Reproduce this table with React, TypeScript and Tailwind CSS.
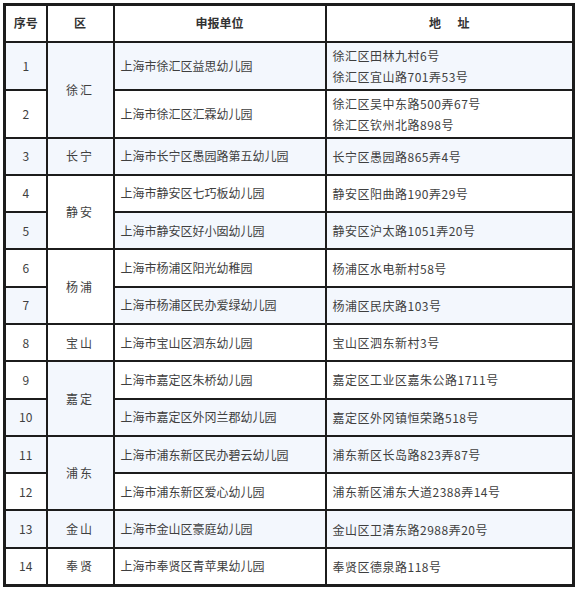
const BLUE = 'bg-[#f3f7fd]';
const WHITE = 'bg-white';

type Row = {
  no: number;
  district?: string;
  span?: number;
  dBlue?: boolean;
  name: string;
  addr: string[];
  blue: boolean;
  tall?: boolean;
};

const rows: Row[] = [
  { no: 1, district: '徐汇', span: 2, dBlue: true, name: '上海市徐汇区益思幼儿园', addr: ['徐汇区田林九村6号', '徐汇区宜山路701弄53号'], blue: true, tall: true },
  { no: 2, name: '上海市徐汇区汇霖幼儿园', addr: ['徐汇区吴中东路500弄67号', '徐汇区钦州北路898号'], blue: false, tall: true },
  { no: 3, district: '长宁', span: 1, dBlue: true, name: '上海市长宁区愚园路第五幼儿园', addr: ['长宁区愚园路865弄4号'], blue: true },
  { no: 4, district: '静安', span: 2, dBlue: false, name: '上海市静安区七巧板幼儿园', addr: ['静安区阳曲路190弄29号'], blue: false },
  { no: 5, name: '上海市静安区好小囡幼儿园', addr: ['静安区沪太路1051弄20号'], blue: true },
  { no: 6, district: '杨浦', span: 2, dBlue: false, name: '上海市杨浦区阳光幼稚园', addr: ['杨浦区水电新村58号'], blue: false },
  { no: 7, name: '上海市杨浦区民办爱绿幼儿园', addr: ['杨浦区民庆路103号'], blue: true },
  { no: 8, district: '宝山', span: 1, dBlue: false, name: '上海市宝山区泗东幼儿园', addr: ['宝山区泗东新村3号'], blue: false },
  { no: 9, district: '嘉定', span: 2, dBlue: true, name: '上海市嘉定区朱桥幼儿园', addr: ['嘉定区工业区嘉朱公路1711号'], blue: false },
  { no: 10, name: '上海市嘉定区外冈兰郡幼儿园', addr: ['嘉定区外冈镇恒荣路518号'], blue: true },
  { no: 11, district: '浦东', span: 2, dBlue: true, name: '上海市浦东新区民办碧云幼儿园', addr: ['浦东新区长岛路823弄87号'], blue: true },
  { no: 12, name: '上海市浦东新区爱心幼儿园', addr: ['浦东新区浦东大道2388弄14号'], blue: false },
  { no: 13, district: '金山', span: 1, dBlue: true, name: '上海市金山区豪庭幼儿园', addr: ['金山区卫清东路2988弄20号'], blue: true },
  { no: 14, district: '奉贤', span: 1, dBlue: false, name: '上海市奉贤区青苹果幼儿园', addr: ['奉贤区德泉路118号'], blue: false },
];

const cell = 'border-2 border-[#1c1c1c] p-0 align-middle';

export default function App() {
  return (
    <div
      className="bg-white min-h-[597px] pt-[3px] pl-[3px] text-[12px] text-[#3f3f3f]"
      style={{ fontFamily: '"Noto Sans CJK SC", "Noto Sans", sans-serif' }}
    >
      <table className="table-fixed border-collapse border-[3px] border-[#1c1c1c] w-[569px]">
        <colgroup>
          <col className="w-[42px]" />
          <col className="w-[67px]" />
          <col className="w-[212px]" />
          <col className="w-[248px]" />
        </colgroup>
        <thead>
          <tr className="h-[37px] bg-white">
            <th className={`${cell} font-bold text-[#333]`}>序号</th>
            <th className={`${cell} font-bold text-[#333]`}>区</th>
            <th className={`${cell} font-bold text-[#333]`}>申报单位</th>
            <th className={`${cell} font-bold text-[#333] whitespace-pre`}>地      址</th>
          </tr>
        </thead>
        <tbody>
          {rows.map((r) => (
            <tr key={r.no} className={r.tall ? 'h-[48px]' : 'h-[37.3px]'}>
              <td className={`${cell} text-center ${r.blue ? BLUE : WHITE}`}>{r.no}</td>
              {r.district && (
                <td rowSpan={r.span} className={`${cell} text-center tracking-[2px] ${r.dBlue ? BLUE : WHITE}`}>
                  {r.district}
                </td>
              )}
              <td className={`${cell} pl-[6px] ${r.blue ? BLUE : WHITE}`}>{r.name}</td>
              <td className={`${cell} pl-[6px] tracking-[0.5px] ${r.blue ? BLUE : WHITE}`}>
                {r.addr.map((a) => (
                  <div key={a} className="leading-[21px]">{a}</div>
                ))}
              </td>
            </tr>
          ))}
        </tbody>
      </table>
    </div>
  );
}
